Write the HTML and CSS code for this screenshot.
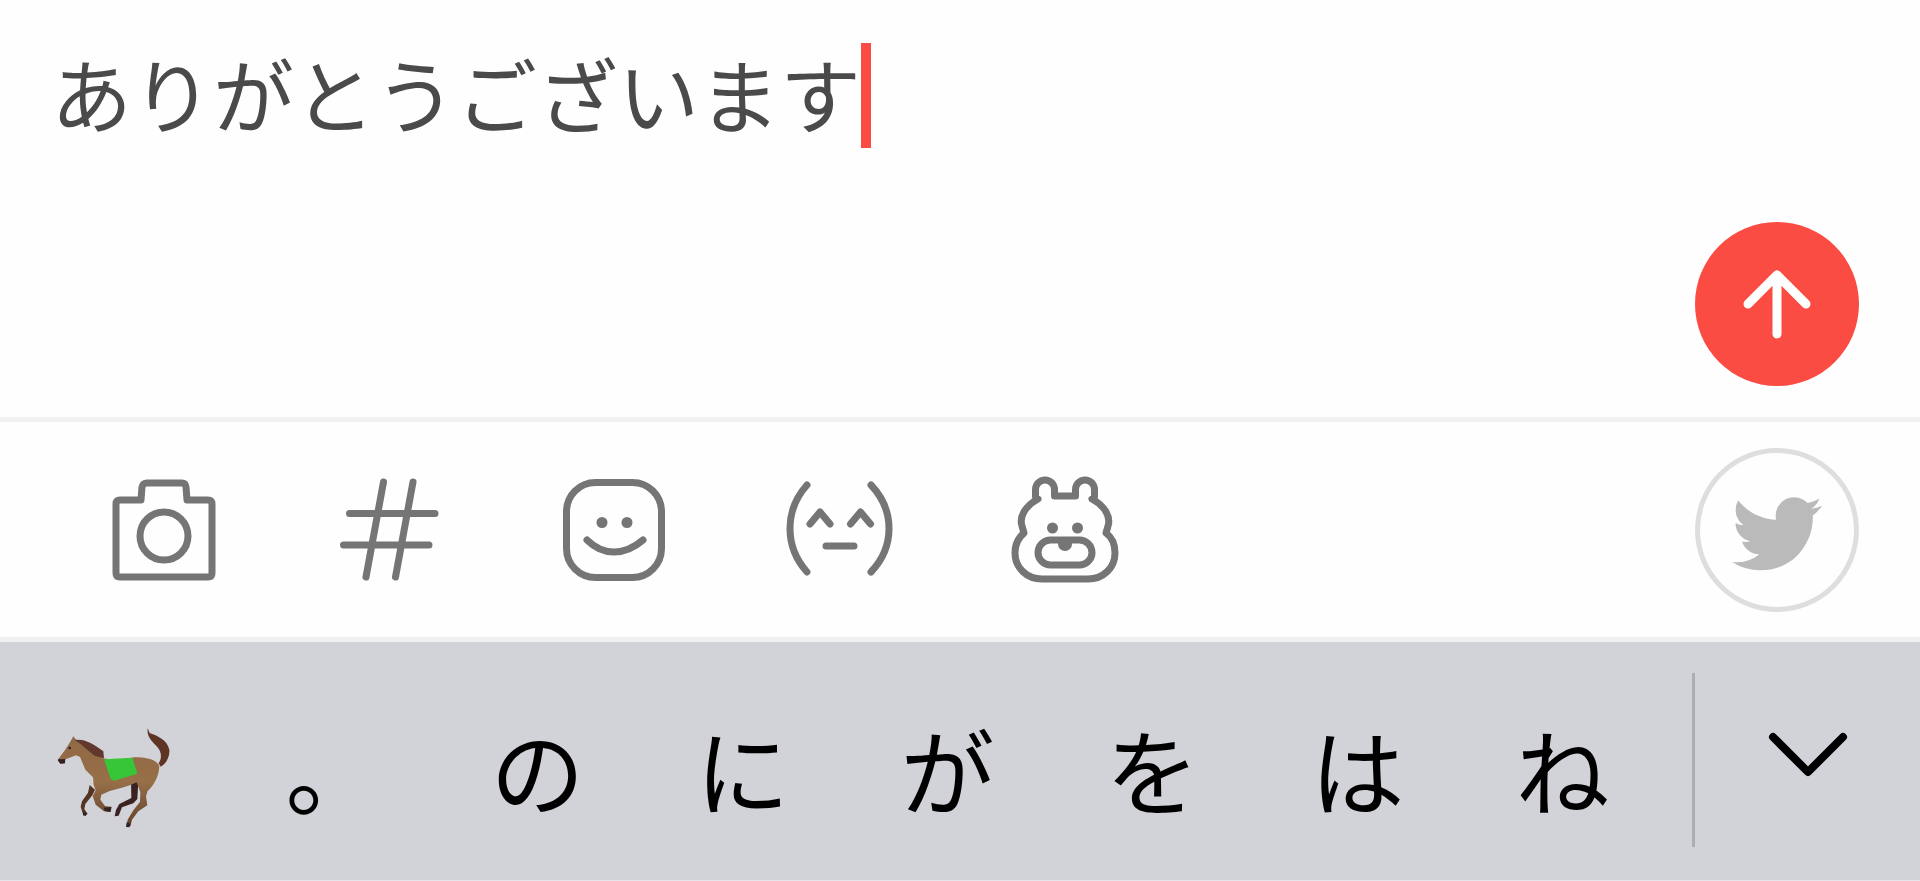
FILE: index.html
```html
<!DOCTYPE html>
<html lang="ja">
<head>
    <meta charset="UTF-8">
    <meta name="viewport" content="width=device-width, initial-scale=1.0">
    <title>投稿</title>
    <link rel="stylesheet" href="styles.css">
</head>
<body>

    <!-- Section 1: Message -->
    <form class="composer">
        <div class="message">
            <input class="message-input" type="text" value="ありがとうございます" aria-label="メッセージ">
            <span class="caret"></span>
        </div>
        <button class="round-button send" type="submit" aria-label="送信">
            <svg width="80" height="80" viewBox="0 0 80 80">
                <path d="M40 70V11M11 40L40 11L69 40"/>
            </svg>
        </button>
    </form>

    <!-- Section 2: Toolbar -->
    <div class="toolbar">
        <button class="tool" type="button" aria-label="カメラ">
            <svg class="tool-icon" viewBox="0 0 112 112">
                <path d="M33 26H12Q8 26 8 30V99Q8 103 12 103H100Q104 103 104 99V30Q104 26 100 26H79L78 13Q77.500 9 74 9H39Q35 9 34 13Z"/>
                <circle cx="56" cy="62" r="24"/>
            </svg>
        </button>
        <button class="tool" type="button" aria-label="ハッシュタグ">
            <svg class="tool-icon" viewBox="0 0 112 112">
                <path d="M50.500 8L33 103M80 8L62.500 103M16.500 39.500H102M10.500 71H96"/>
            </svg>
        </button>
        <button class="tool" type="button" aria-label="スタンプ">
            <svg class="tool-icon" viewBox="0 0 112 112">
                <rect x="8.500" y="8.500" width="95" height="95" rx="29"/>
                <path d="M29 66Q41 78 56 78T85 66"/>
                <circle class="dot" cx="44" cy="48.500" r="5.500"/>
                <circle class="dot" cx="69" cy="48.500" r="5.500"/>
            </svg>
        </button>
        <button class="tool" type="button" aria-label="顔文字">
            <svg class="tool-icon" viewBox="0 0 112 112">
                <path d="M24 11Q7 30 7 54.500T24 98M88 11Q106 30 106 54.500T88 98"/>
                <path d="M27 50L37 38L47 50M67.500 50L77.500 38L87.500 50M43 72H71"/>
            </svg>
        </button>
        <button class="tool" type="button" aria-label="キャラクター">
            <svg class="tool-icon" viewBox="0 0 112 112">
                <path d="M30 25L27.500 23V15.500A9.500 9.500 0 0 1 46.500 15.500V22H67.500V15.500A9.500 9.500 0 0 1 86.500 15.500V23L84 25C97 32 103 43 100 52L98 59C105 64 107 71 107 79C107 94 95 105 80 105H34C19 105 7 94 7 79C7 71 10 64 16 59L14 52C11 43 17 32 30 25Z"/>
                <rect x="30" y="66" width="54" height="25" rx="12.500"/>
                <path class="dot" d="M50 66H64V70A7 7 0 0 1 50 70Z"/>
                <circle class="dot" cx="44.500" cy="54" r="5.500"/>
                <circle class="dot" cx="69.500" cy="54" r="5.500"/>
            </svg>
        </button>
        <button class="round-button twitter" type="button" aria-label="Twitter">
            <svg width="90" height="90" viewBox="0 -1 24 24">
                <path d="M23.953 4.57a10 10 0 01-2.825.775 4.958 4.958 0 002.163-2.723c-.951.555-2.005.959-3.127 1.184a4.92 4.92 0 00-8.384 4.482C7.69 8.095 4.067 6.13 1.64 3.162a4.822 4.822 0 00-.666 2.475c0 1.71.87 3.213 2.188 4.096a4.904 4.904 0 01-2.228-.616v.06a4.923 4.923 0 003.946 4.827 4.996 4.996 0 01-2.212.085 4.936 4.936 0 004.604 3.417 9.867 9.867 0 01-6.102 2.105c-.39 0-.779-.023-1.17-.067a13.995 13.995 0 007.557 2.209c9.053 0 13.998-7.496 13.998-13.985 0-.21 0-.42-.015-.63A9.935 9.935 0 0024 4.59z"/>
            </svg>
        </button>
    </div>

    <!-- Section 3: Keyboard suggestions -->
    <div class="keyboard">
        <div class="suggestions">
            <button class="suggestion" type="button" aria-label="馬">
                <svg class="emoji" width="140" height="100" viewBox="81 87 420 300">
                    <defs>
                        <linearGradient id="coat" x1="0" y1="0" x2="0" y2="1">
                            <stop offset="0" stop-color="#8f6845"/>
                            <stop offset="0.500" stop-color="#977049"/>
                            <stop offset="1" stop-color="#62402b"/>
                        </linearGradient>
                    </defs>
                    <!-- far legs -->
                    <path fill="#3b2222" d="M300 245L322 248L319 300L307 313L273 325L263 350L251 352L255 333L265 315L301 297Z"/>
                    <path fill="#533322" d="M176 258L192 272L184 289L163 315L160 330L170 345L157 349L149 323L153 307L171 281Z"/>
                    <!-- tail -->
                    <path fill="#5e3425" d="M350 88L356 102C382 111 409 124 415 152C417 174 404 196 389 203L383 193C394 176 391 158 379 144C363 126 347 115 350 88Z"/>
                    <!-- body and head -->
                    <path fill="url(#coat)" d="M127 112L134 121L157 130L188 158L216 178L254 184L310 175C345 175 378 181 385 202C384 231 369 260 350 276L345 292L349 319L322 337L303 362L298 382L286 384L290 362L307 334L327 308L328 280L317 250C290 263 261 270 236 276L211 287L208 302L222 321L242 324L239 339L219 337L194 317L185 291L194 274L188 258L186 235L163 212L147 174L135 169L104 181L101 193L89 194L79 184L87 173L102 153L117 130Z"/>
                    <path fill="#60392c" d="M131 124C153 116 186 132 217 157L219 178L190 170L150 136Z"/>
                    <path fill="#352026" d="M79 181L102 180L102 193L88 194Z"/>
                    <path fill="#302424" d="M218 326L241 323L238 339L221 336ZM287 370L299 374L295 385L285 384ZM156 339L169 343L164 351L156 349Z"/>
                    <circle fill="#352026" cx="116" cy="147" r="4"/>
                    <path fill="#36c637" d="M219 181L304 176L319 224L249 245L239 240Z"/>
                </svg>
            </button>
            <button class="suggestion" type="button">。</button>
            <button class="suggestion" type="button">の</button>
            <button class="suggestion" type="button">に</button>
            <button class="suggestion" type="button">が</button>
            <button class="suggestion" type="button">を</button>
            <button class="suggestion" type="button">は</button>
            <button class="suggestion" type="button">ね</button>
        </div>
        <button class="expand" type="button" aria-label="候補を開く">
            <svg width="80" height="48" viewBox="0 0 80 48">
                <path d="M5 7L40 42L75 7"/>
            </svg>
        </button>
    </div>

</body>
</html>
```
FILE: styles.css
```css
* {
    box-sizing: border-box;
}

body {
    font-family: "Noto Sans CJK JP", sans-serif;
    background-color: #fefefe;
    display: flex;
    flex-direction: column;
    min-height: 100vh;
    margin: 0;
}

button, input {
    font-family: inherit;
    border: none;
    padding: 0;
    margin: 0;
    background: none;
}

button {
    cursor: pointer;
}

svg {
    display: block;
    flex-shrink: 0;
}

.composer {
    flex: 1;
    display: flex;
    flex-direction: column;
    justify-content: space-between;
    padding: 43px 61px 31px 51px;
}

.message {
    display: flex;
}

.message-input {
    width: 10em;
    height: 105px;
    padding-bottom: 8px;
    font-size: 81px;
    line-height: 97px;
    color: #4a4a4a;
    outline: none;
}

.caret {
    width: 10px;
    background-color: #fb4c44;
}

.round-button {
    display: flex;
    align-items: center;
    justify-content: center;
    width: 164px;
    height: 164px;
    border-radius: 50%;
    margin-left: auto;
}

.send {
    background-color: #fb4c44;
}

.send path {
    fill: none;
    stroke: white;
    stroke-width: 9;
    stroke-linecap: round;
    stroke-linejoin: round;
}

.toolbar {
    display: flex;
    align-items: center;
    padding: 26px 61px 25px 51px;
    border-top: 5px solid #f2f2f2;
    border-bottom: 5px solid #f0f0f0;
}

.tool {
    display: flex;
    justify-content: center;
    width: 225px;
}

.tool-icon {
    width: 112px;
    height: 112px;
    fill: none;
    stroke: #757575;
    stroke-width: 7;
    stroke-linecap: round;
    stroke-linejoin: round;
}

.tool-icon .dot {
    fill: #757575;
    stroke: none;
}

.twitter {
    border: 5px solid #dedede;
}

.twitter path {
    fill: #bababa;
}

.keyboard {
    display: flex;
    padding: 31px 0 33px;
    background-color: #d2d3d9;
    border-bottom: 1px solid #e6e6ea;
}

.suggestions {
    flex: 1;
    display: grid;
    grid-template-columns: repeat(8, 1fr);
    padding: 0 27px 0 25px;
    border-right: 3px solid #acadb2;
}

.suggestion {
    display: flex;
    align-items: center;
    justify-content: center;
    height: 174px;
    padding-top: 16px;
    font-size: 94px;
    line-height: 138px;
    color: black;
}

.emoji {
    margin-top: 20px;
}

.expand {
    display: flex;
    align-items: center;
    justify-content: center;
    width: 225px;
    padding-bottom: 12px;
}

.expand path {
    fill: none;
    stroke: black;
    stroke-width: 8;
    stroke-linecap: round;
    stroke-linejoin: round;
}
```
